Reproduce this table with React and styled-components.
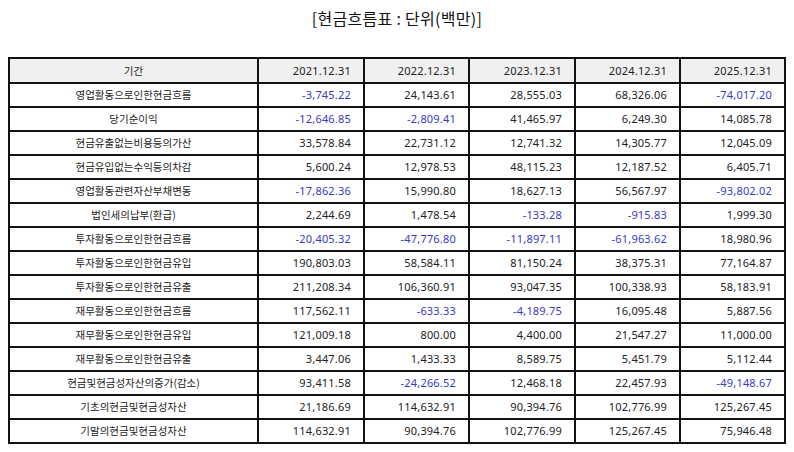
import React from "react";
import styled, { createGlobalStyle } from "styled-components";

const Global = createGlobalStyle`
  html, body { margin: 0; padding: 0; background: #fff; }
  body { font-family: "Noto Sans", "Noto Sans CJK KR", sans-serif; color: #222; }
`;

const Page = styled.div`
  width: 794px;
  height: 452px;
  display: flex;
  flex-direction: column;
  align-items: center;
  padding-top: 6px;
  box-sizing: border-box;
`;

const Title = styled.h1`
  margin: 0;
  font-family: "Noto Sans CJK KR", sans-serif;
  font-size: 16px;
  font-weight: 400;
  letter-spacing: 0.3px;
  line-height: 24px;
  color: #111;
  height: 51px;
`;

const Table = styled.table`
  border-collapse: collapse;
  width: 776px;
  table-layout: fixed;
  font-size: 11px;
`;

const Row = styled.tr`
  height: 24px;
`;

const HeadRow = styled.tr`
  height: 25px;
  background: #f0f0f0;
`;

const Cell = styled.td`
  border: 2px solid #111;
  padding: 0 12px 0 4px;
  text-align: right;
  color: ${(p) => (p.$neg ? "#3838cc" : "#222")};
  white-space: nowrap;
  line-height: 14px;
  letter-spacing: 0.2px;
`;

const LabelCell = styled(Cell)`
  text-align: center;
  padding: 0 4px;
  font-family: "Noto Sans CJK KR", sans-serif;
  font-size: 10.5px;
  letter-spacing: 0;
`;

const HeadCell = styled(Cell).attrs({ as: "th" })`
  font-weight: 400;
`;

const HeadLabel = styled(LabelCell).attrs({ as: "th" })`
  font-weight: 400;
`;

const cols = [249, 106, 105, 106, 105, 105];
const years = ["2021.12.31", "2022.12.31", "2023.12.31", "2024.12.31", "2025.12.31"];

const rows = [
  ["영업활동으로인한현금흐름", "-3,745.22", "24,143.61", "28,555.03", "68,326.06", "-74,017.20"],
  ["당기순이익", "-12,646.85", "-2,809.41", "41,465.97", "6,249.30", "14,085.78"],
  ["현금유출없는비용등의가산", "33,578.84", "22,731.12", "12,741.32", "14,305.77", "12,045.09"],
  ["현금유입없는수익등의차감", "5,600.24", "12,978.53", "48,115.23", "12,187.52", "6,405.71"],
  ["영업활동관련자산부채변동", "-17,862.36", "15,990.80", "18,627.13", "56,567.97", "-93,802.02"],
  ["법인세의납부(환급)", "2,244.69", "1,478.54", "-133.28", "-915.83", "1,999.30"],
  ["투자활동으로인한현금흐름", "-20,405.32", "-47,776.80", "-11,897.11", "-61,963.62", "18,980.96"],
  ["투자활동으로인한현금유입", "190,803.03", "58,584.11", "81,150.24", "38,375.31", "77,164.87"],
  ["투자활동으로인한현금유출", "211,208.34", "106,360.91", "93,047.35", "100,338.93", "58,183.91"],
  ["재무활동으로인한현금흐름", "117,562.11", "-633.33", "-4,189.75", "16,095.48", "5,887.56"],
  ["재무활동으로인한현금유입", "121,009.18", "800.00", "4,400.00", "21,547.27", "11,000.00"],
  ["재무활동으로인한현금유출", "3,447.06", "1,433.33", "8,589.75", "5,451.79", "5,112.44"],
  ["현금및현금성자산의증가(감소)", "93,411.58", "-24,266.52", "12,468.18", "22,457.93", "-49,148.67"],
  ["기초의현금및현금성자산", "21,186.69", "114,632.91", "90,394.76", "102,776.99", "125,267.45"],
  ["기말의현금및현금성자산", "114,632.91", "90,394.76", "102,776.99", "125,267.45", "75,946.48"],
];

export default function App() {
  return (
    <Page>
      <Global />
      <Title>[현금흐름표 : 단위(백만)]</Title>
      <Table>
        <colgroup>
          {cols.map((w, i) => (
            <col key={i} style={{ width: w }} />
          ))}
        </colgroup>
        <thead>
          <HeadRow>
            <HeadLabel>기간</HeadLabel>
            {years.map((y) => (
              <HeadCell key={y}>{y}</HeadCell>
            ))}
          </HeadRow>
        </thead>
        <tbody>
          {rows.map(([label, ...vals]) => (
            <Row key={label}>
              <LabelCell>{label}</LabelCell>
              {vals.map((v, i) => (
                <Cell key={i} $neg={v.startsWith("-")}>
                  {v}
                </Cell>
              ))}
            </Row>
          ))}
        </tbody>
      </Table>
    </Page>
  );
}
